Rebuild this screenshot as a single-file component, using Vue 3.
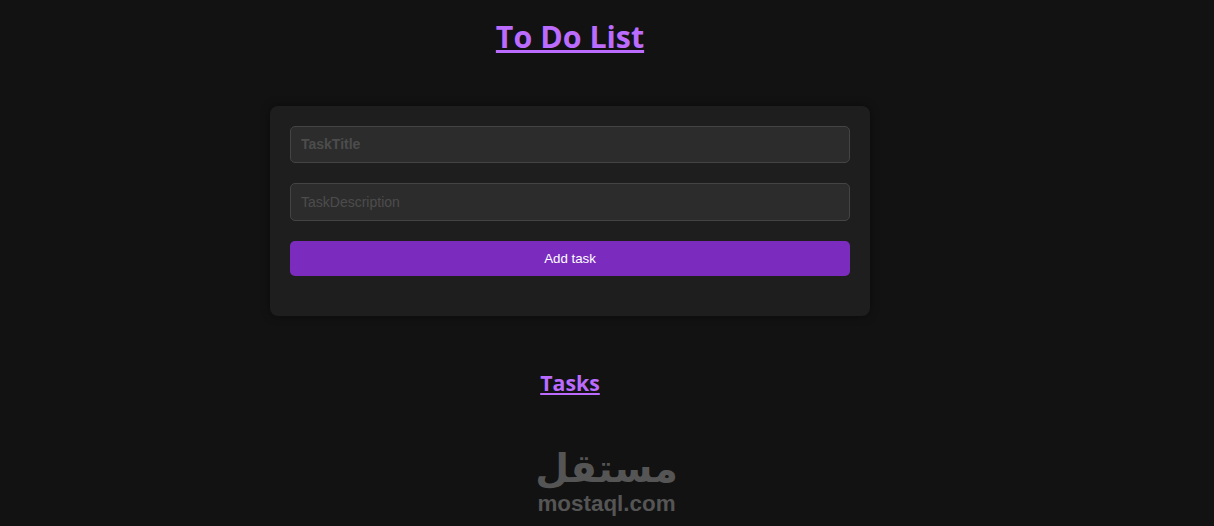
<script setup>
const title = 'To Do List'
</script>

<template>
  <div class="page">
    <main class="app">
      <h1 class="title">{{ title }}</h1>
      <form class="card" @submit.prevent>
        <input class="field strong" placeholder="TaskTitle" />
        <input class="field wide" placeholder="TaskDescription" />
        <button class="add" type="button">Add task</button>
      </form>
      <h2 class="tasks">Tasks</h2>
    </main>
    <div class="logo">
      <span class="ar" lang="ar" dir="rtl">مستقل</span>
      <span class="en">mostaql.com</span>
    </div>
  </div>
</template>

<style>
html, body { margin: 0; background: #121212; }
</style>

<style scoped>
.page {
  position: relative;
  width: 1214px;
  height: 526px;
  overflow: hidden;
  background: #121212;
  font-family: "Liberation Sans", Arial, sans-serif;
}
.app {
  width: 1140px;
  display: flex;
  flex-direction: column;
  align-items: center;
}
.title, .tasks {
  margin: 0;
  color: #bb6bfd;
  font-family: "Open Sans", "Noto Sans", sans-serif;
  font-weight: 700;
  text-decoration: underline;
}
.title {
  margin-top: 15px;
  font-size: 30.4px;
  line-height: 44px;
}
.card {
  box-sizing: border-box;
  width: 600px;
  height: 210px;
  margin-top: 47px;
  padding: 20px;
  display: flex;
  flex-direction: column;
  gap: 20px;
  background: #1e1e1e;
  border-radius: 8px;
  box-shadow: 0 0 10px rgba(0, 0, 0, 0.4);
}
.field {
  box-sizing: border-box;
  width: 100%;
  height: 37px;
  padding: 0 10px;
  background: #2c2c2c;
  border: 1px solid #444;
  border-radius: 5px;
  color: #eee;
  font: 14px "Liberation Sans", Arial, sans-serif;
  outline: none;
}
.wide { height: 38px; }
.strong { padding-bottom: 2px; }
.field::placeholder { color: #4c4c4c; opacity: 1; }
.strong::placeholder { font-weight: 700; }
.add {
  height: 35px;
  border: 0;
  border-radius: 5px;
  background: #7b2cbf;
  color: #fff;
  font: 13.3px "Liberation Sans", Arial, sans-serif;
}
.tasks {
  margin-top: 48px;
  font-size: 21.3px;
  line-height: 38px;
}
.logo {
  position: absolute;
  left: 537px;
  top: 446px;
  width: 139px;
  display: flex;
  flex-direction: column;
  align-items: center;
  color: #555;
}
.ar {
  font-family: "DejaVu Sans", sans-serif;
  font-weight: 700;
  font-size: 39px;
  line-height: 46px;
}
.en {
  font-weight: 700;
  font-size: 22.4px;
  line-height: 24px;
}
</style>
